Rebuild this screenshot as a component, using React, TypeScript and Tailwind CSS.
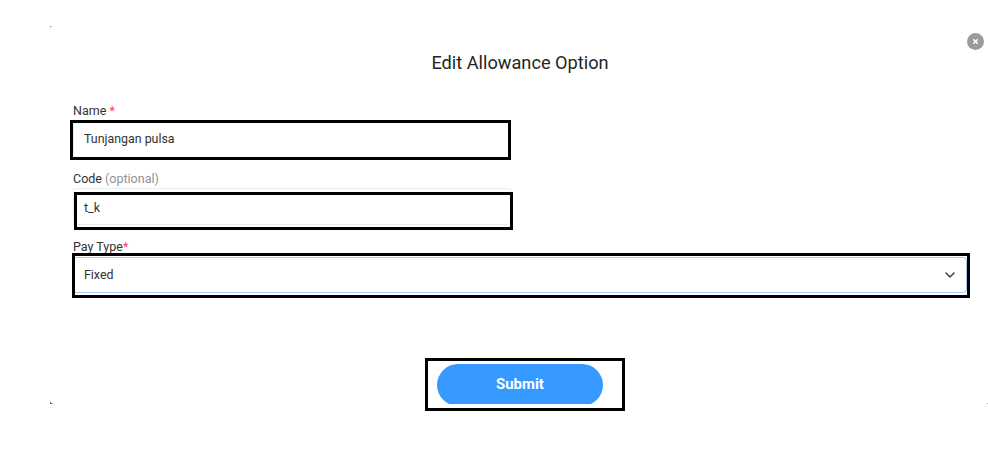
import type { ReactNode } from "react";

function Label({ children }: { children: ReactNode }) {
  return <label className="block h-5 whitespace-pre text-[12.5px] leading-5 text-[#333333]">{children}</label>;
}

function CornerMarks() {
  return (
    <svg className="pointer-events-none absolute left-0 top-0" width="988" height="458" shapeRendering="crispEdges">
      <rect x="50" y="26" width="1" height="1" fill="#888" />
      <rect x="51" y="26" width="1" height="1" fill="#ccc" />
      <rect x="50" y="27" width="1" height="1" fill="#ddd" />
      <rect x="50" y="401" width="1" height="1" fill="#ccc" />
      <rect x="50" y="402" width="1" height="1" fill="#888" />
      <rect x="50" y="403" width="2" height="1" fill="#555" />
      <rect x="52" y="403" width="1" height="1" fill="#bbb" />
      <rect x="987" y="403" width="1" height="1" fill="#aaa" />
    </svg>
  );
}

export default function App() {
  return (
    <main className="relative h-[458px] w-[988px] overflow-hidden bg-white font-['Roboto',sans-serif]">
      <CornerMarks />
      <header className="flex h-[101px] pl-[73px] pt-[32px]">
        <h1 className="mt-[17px] w-[894px] text-center text-[18.2px] leading-7 text-[#252525]">Edit Allowance Option</h1>
        <button aria-label="Close" className="mt-[0.5px] grid size-[17px] shrink-0 place-items-center rounded-full bg-[#9b9b9b]">
          <svg width="5" height="5" viewBox="0 0 5 5" fill="none" stroke="white" strokeWidth="1.5">
            <path d="m.3.3 4.4 4.4m0-4.4L.3 4.7" />
          </svg>
        </button>
      </header>
      <form className="flex flex-col pl-[73px]" onSubmit={(e) => e.preventDefault()}>
        <section className="h-[68px]">
          <Label>Name <span className="text-[#ff3b69]">*</span></Label>
          <div className="relative h-[37px] w-[438px] rounded border border-[#e9eaec] pl-[10px] text-[12.4px] leading-[33px] text-[#333333]">
            Tunjangan pulsa
            <span className="absolute -left-1 -top-[2px] h-10 w-[441px] border-[3px] border-black" />
          </div>
        </section>
        <section className="h-[68px]">
          <Label>Code <span className="text-[#929292]">(optional)</span></Label>
          <div className="relative -mt-px h-[37px] w-[438px] rounded border border-[#e9eaec] pl-[10px] text-[12.4px] leading-[37px] text-[#333333]">
            t_k
            <span className="absolute left-0 top-[3px] h-[38px] w-[439px] border-[3px] border-black" />
          </div>
        </section>
        <section className="h-[127px]">
          <Label>Pay Type<span className="text-[#ff3b69]">*</span></Label>
          <div className="relative flex h-9 w-[894px] items-center rounded border border-[#a6c9f7] pl-[10px] pr-[11.5px] text-[12.4px] text-[#333333]">
            <span>Fixed</span>
            <svg className="ml-auto" width="10" height="6" viewBox="0 0 10 6" fill="none" stroke="#343a40" strokeWidth="1.4" strokeLinecap="round" strokeLinejoin="round">
              <path d="m1 1 4 4 4-4" />
            </svg>
            <span className="absolute -left-[2px] -top-[5px] h-[45px] w-[898px] border-[3px] border-black" />
          </div>
        </section>
        <div className="ml-[364px] h-10 w-[166px] overflow-hidden">
          <button className="h-[42px] w-full rounded-full bg-[#3699ff] pb-px text-[14.9px] font-bold text-white">Submit</button>
        </div>
      </form>
      <span className="pointer-events-none absolute left-[425px] top-[358px] h-[53px] w-[200px] border-[3px] border-black" />
    </main>
  );
}
